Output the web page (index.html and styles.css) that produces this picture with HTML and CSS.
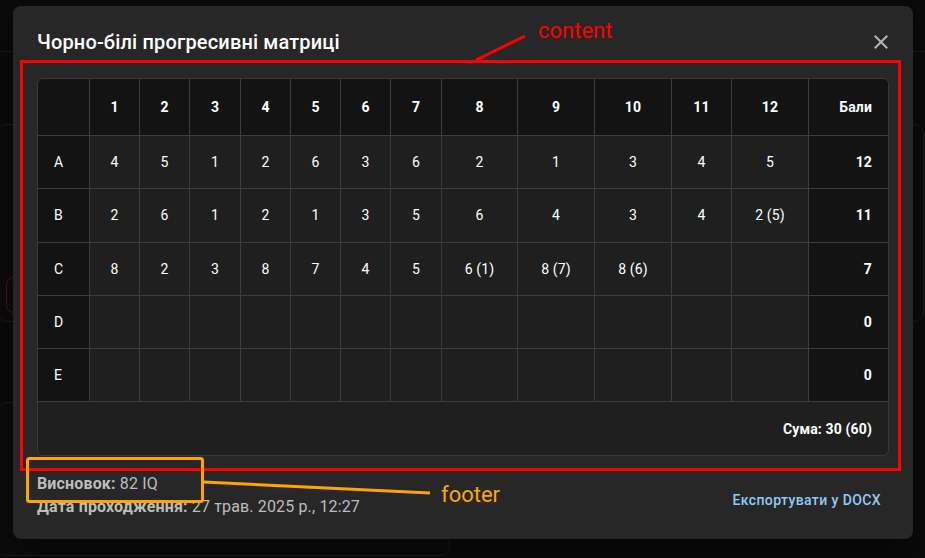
FILE: index.html
```html
<!DOCTYPE html>
<html lang="uk">
<head>
<meta charset="utf-8">
<title>Чорно-білі прогресивні матриці</title>
<link rel="stylesheet" href="styles.css">
</head>
<body>
<div class="page">
  <header class="page-header"></header>
  <main class="page-main">
    <div class="card card-left"><div class="err-btn"></div></div>
    <div class="card card-right"></div>
    <div class="card card-left card-short"></div>
  </main>
</div>

<div class="dialog" role="dialog">
  <div class="dialog-title-row">
    <h2 class="dialog-title">Чорно-білі прогресивні матриці</h2>
    <button class="close-btn" aria-label="close">
      <svg viewBox="0 0 24 24" width="24" height="24"><path fill="currentColor" d="M19 6.41 17.59 5 12 10.59 6.41 5 5 6.41 10.59 12 5 17.59 6.41 19 12 13.41 17.59 19 19 17.59 13.41 12z"/></svg>
    </button>
  </div>

  <div class="dialog-content">
    <div class="table-wrap">
      <table class="matrix">
        <colgroup>
          <col class="w52"><col class="w50"><col class="w50"><col class="w51"><col class="w50"><col class="w50"><col class="w50"><col class="w51"><col class="w76"><col class="w77"><col class="w77"><col class="w60"><col class="w77"><col class="w79">
        </colgroup>
        <thead>
          <tr>
            <th class="label"></th><th>1</th><th>2</th><th>3</th><th>4</th><th>5</th><th>6</th><th>7</th><th>8</th><th>9</th><th>10</th><th>11</th><th>12</th><th class="score">Бали</th>
          </tr>
        </thead>
        <tbody>
          <tr><td class="label">A</td><td>4</td><td>5</td><td>1</td><td>2</td><td>6</td><td>3</td><td>6</td><td>2</td><td>1</td><td>3</td><td>4</td><td>5</td><td class="score">12</td></tr>
          <tr><td class="label">B</td><td>2</td><td>6</td><td>1</td><td>2</td><td>1</td><td>3</td><td>5</td><td>6</td><td>4</td><td>3</td><td>4</td><td>2 (5)</td><td class="score">11</td></tr>
          <tr><td class="label">C</td><td>8</td><td>2</td><td>3</td><td>8</td><td>7</td><td>4</td><td>5</td><td>6 (1)</td><td>8 (7)</td><td>8 (6)</td><td></td><td></td><td class="score">7</td></tr>
          <tr><td class="label">D</td><td></td><td></td><td></td><td></td><td></td><td></td><td></td><td></td><td></td><td></td><td></td><td></td><td class="score">0</td></tr>
          <tr><td class="label">E</td><td></td><td></td><td></td><td></td><td></td><td></td><td></td><td></td><td></td><td></td><td></td><td></td><td class="score">0</td></tr>
        </tbody>
        <tfoot>
          <tr><td class="sum" colspan="14">Сума: 30 (60)</td></tr>
        </tfoot>
      </table>
    </div>
  </div>

  <div class="dialog-footer">
    <div class="summary">
      <div><strong>Висновок:</strong> 82 IQ</div>
      <div><strong>Дата проходження:</strong> 27 трав. 2025 р., 12:27</div>
    </div>
    <button class="export-btn">Експортувати у DOCX</button>
  </div>
</div>

<svg class="annotations" width="925" height="558" viewBox="0 0 925 558">
  <rect x="21.5" y="61.5" width="878" height="408" fill="none" stroke="#ff0000" stroke-width="3"/>
  <line x1="476" y1="60" x2="525" y2="36" stroke="#ff0000" stroke-width="3"/>
  <text x="538" y="38" class="annot-text" fill="#ff0000">content</text>
  <rect x="27.5" y="458.5" width="175" height="43" rx="2" fill="none" stroke="#ffa500" stroke-width="3"/>
  <line x1="203" y1="482" x2="430" y2="493" stroke="#ffa500" stroke-width="3"/>
  <text x="441" y="502" class="annot-text" fill="#ffa500">footer</text>
</svg>
</body>
</html>
```

FILE: styles.css
```css
* {
  box-sizing: border-box;
}

html,
body {
  margin: 0;
  height: 100%;
}

body {
  background: #0a0a0a;
  font-family: Roboto, "Noto Sans", "Liberation Sans", sans-serif;
  color: #fff;
  overflow: hidden;
  position: relative;
}

/* background page (mostly hidden by the dialog) */
.page {
  height: 100vh;
  overflow: hidden;
}

.page-header {
  height: 52px;
  border-bottom: 1px solid #171717;
}

.page-main {
  display: grid;
  grid-template-columns: 1fr 1fr;
  column-gap: 24px;
  row-gap: 80px;
  padding: 72px 1px 0 0;
}

.card {
  height: 198px;
  border: 1px solid #1b1b1b;
  border-radius: 10px;
  background: #0b0b0b;
}

.card-left {
  margin-left: -3px;
  padding: 152px 0 0 8px;
}

.card-short {
  height: 150px;
}

.err-btn {
  width: 120px;
  height: 36px;
  border: 1px solid #4a1616;
  border-radius: 8px;
}

/* dialog */
.dialog {
  position: absolute;
  left: 13px;
  top: 6px;
  width: 900px;
  height: 533px;
  background: #272727;
  border-radius: 8px;
  box-shadow: 0 11px 15px -7px rgba(0, 0, 0, 0.2), 0 24px 38px 3px rgba(0, 0, 0, 0.14);
  display: flex;
  flex-direction: column;
  padding: 20px 24px 22px;
}

.dialog-title-row {
  display: flex;
  align-items: center;
  justify-content: space-between;
  height: 32px;
}

.dialog-title {
  margin: 0;
  font-size: 20px;
  font-weight: 500;
  line-height: 32px;
  letter-spacing: 0.15px;
  color: #fff;
}

.close-btn {
  background: none;
  border: 0;
  padding: 0;
  width: 24px;
  height: 24px;
  margin-right: -4px;
  color: #b3b3b3;
  display: flex;
}

.dialog-content {
  margin-top: 20px;
}

.table-wrap {
  border: 1px solid #3a3a3a;
  border-radius: 6px;
  overflow: hidden;
}

.matrix {
  width: 850px;
  table-layout: fixed;
  border-collapse: separate;
  border-spacing: 0;
  font-size: 14px;
  letter-spacing: 0.15px;
}

.w50 { width: 50px; }
.w51 { width: 51px; }
.w52 { width: 52px; }
.w60 { width: 60px; }
.w76 { width: 76px; }
.w77 { width: 77px; }
.w79 { width: 79px; }

.matrix th,
.matrix td {
  padding: 0;
  text-align: center;
  border-right: 1px solid #3d3d3d;
  border-bottom: 1px solid #3d3d3d;
  color: #fff;
  line-height: 20px;
}

.matrix th {
  background: #131313;
  font-weight: 700;
}

.matrix thead tr {
  height: 57px;
}

.matrix tbody tr {
  height: 53.25px;
}

.matrix td {
  background: #1f1f1f;
  font-weight: 400;
}

.matrix .label {
  text-align: left;
  padding-left: 16px;
  background: #131313;
}

.matrix .score {
  text-align: right;
  padding-right: 16px;
  border-right: 0;
  background: #131313;
  font-weight: 700;
}

.matrix tfoot tr {
  height: 53px;
}

.matrix .sum {
  text-align: right;
  padding-right: 16px;
  border: 0;
  font-weight: 700;
  background: #1f1f1f;
}

/* footer */
.dialog-footer {
  margin-top: 16px;
  display: flex;
  justify-content: space-between;
  align-items: flex-end;
}

.summary {
  font-size: 16px;
  line-height: 23px;
  letter-spacing: 0.15px;
  color: #bdbdbd;
}

.summary strong {
  font-weight: 700;
}

.export-btn {
  background: none;
  border: 0;
  padding: 6px 8px;
  font-family: inherit;
  font-size: 14px;
  font-weight: 500;
  line-height: 24.5px;
  letter-spacing: 0.4px;
  color: #90caf9;
}

/* annotation overlay */
.annotations {
  position: absolute;
  left: 0;
  top: 0;
  pointer-events: none;
}

.annot-text {
  font-family: Roboto, "Liberation Sans", sans-serif;
  font-size: 22px;
}
```
